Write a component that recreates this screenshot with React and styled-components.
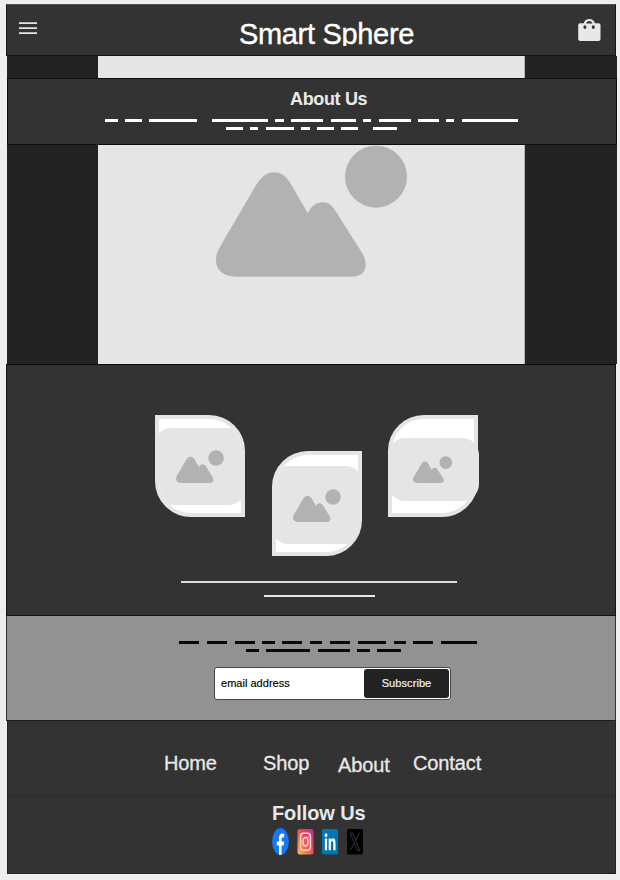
import React from "react";
import styled, { createGlobalStyle } from "styled-components";

const GlobalStyle = createGlobalStyle`
  *, *::before, *::after { box-sizing: border-box; }
  body {
    margin: 0;
    background: #eeeeee;
    font-family: "Liberation Sans", Arial, sans-serif;
  }
`;

const Page = styled.div`
  width: 620px;
  height: 880px;
  padding: 4px 0 0 6px;
  overflow: hidden;
  display: flex;
  flex-direction: column;
`;

const Header = styled.header`
  width: 610px;
  height: 52px;
  flex: none;
  display: flex;
  justify-content: space-between;
  align-items: flex-start;
  padding: 0 14px 0 12px;
  background: #333333;
  border: 1px solid #161616;
  border-top-color: #505050;
`;

const Brand = styled.h1`
  margin: 8px 0 0 38px;
  height: 33px;
  overflow: hidden;
  font-size: 29px;
  line-height: 43px;
  font-weight: 400;
  color: #ffffff;
  letter-spacing: -0.32px;
  white-space: nowrap;
  -webkit-text-stroke: 0.4px #ffffff;
`;

const MenuIcon = styled.svg`
  width: 18px;
  height: 12px;
  margin-top: 17px;
`;

const BagIcon = styled.svg`
  width: 23px;
  height: 23px;
  margin-top: 14px;
`;

const Hero = styled.section`
  width: 610px;
  height: 308px;
  flex: none;
  margin-left: 1px;
  display: flex;
  flex-direction: column;
  background: #232323;
`;

const HeroPane = styled.div`
  width: 427px;
  height: ${(p) => p.$height}px;
  margin-left: 91px;
  padding-left: 118px;
  background: #e5e5e5;
  border-right: 1px solid #b5b5b5;
`;

const Banner = styled.div`
  height: 67px;
  padding-top: 10px;
  background: #333333;
  border: 1px solid #0c0c0c;
`;

const BannerTitle = styled.h2`
  margin: 0 0 0 282px;
  height: 30px;
  font-size: 18px;
  line-height: 20px;
  font-weight: 700;
  letter-spacing: -0.35px;
  color: #e9e9e9;
`;

const DashRow = styled.div`
  display: flex;
  height: 3px;
  margin: 0 0 5px ${(p) => p.$left}px;
`;

const Dash = styled.span`
  flex: none;
  width: ${(p) => p.$w}px;
  margin-right: ${(p) => p.$gap}px;
  background: ${(p) => p.$color};
`;

const Gallery = styled.section`
  width: 610px;
  height: 252px;
  flex: none;
  display: flex;
  flex-direction: column;
  background: #333333;
  border: 1px solid #141414;
  border-top-color: #0b0b0b;
`;

const LeafRow = styled.div`
  display: flex;
  align-items: flex-start;
  height: 216px;
  padding: 50px 0 0 148px;
  gap: 27px;
`;

const Leaf = styled.div`
  width: 90px;
  height: ${(p) => p.$height}px;
  margin-top: ${(p) => p.$drop}px;
  margin-left: ${(p) => p.$shift || 0}px;
  display: flex;
  justify-content: center;
  background: #ffffff;
  border: 4px solid #e5e5e5;
  border-radius: ${(p) => (p.$flip ? "36px 0 36px 0" : "0 36px 0 36px")};
  overflow: ${(p) => (p.$spill ? "visible" : "hidden")};
`;

const Tile = styled.div`
  flex: none;
  width: ${(p) => p.$width}px;
  height: ${(p) => p.$height}px;
  margin-top: ${(p) => p.$top}px;
  display: flex;
  align-items: center;
  justify-content: center;
  background: #e5e5e5;
  border-radius: ${(p) => p.$radius || 16}px;
`;

const Rule = styled.div`
  width: ${(p) => p.$width}px;
  height: 2px;
  margin: 0 0 ${(p) => p.$below}px ${(p) => p.$left}px;
  background: ${(p) => p.$color};
`;

const Newsletter = styled.section`
  width: 610px;
  height: 105px;
  flex: none;
  padding-top: 25px;
  background: #929292;
  border: 1px solid #333333;
  border-top: 0;
  border-bottom-color: #1c1c1c;
`;

const Form = styled.form`
  width: 237px;
  height: 33px;
  margin: 15px 0 0 207px;
  display: flex;
  align-items: center;
  padding-right: 1px;
  background: #ffffff;
  border: 1px solid #484848;
  border-radius: 3px;
`;

const EmailField = styled.label`
  flex: 1;
  padding: 0 0 2px 6px;
  font-size: 11px;
  line-height: 14px;
  letter-spacing: 0.02px;
  color: #000000;
  -webkit-text-stroke: 0.15px #000000;
`;

const Subscribe = styled.button`
  width: 85px;
  height: 29px;
  padding: 0 0 2px;
  border: 0;
  border-radius: 3px;
  background: #222222;
  color: #f0f0f0;
  font: 11px "Liberation Sans", Arial, sans-serif;
  letter-spacing: 0.08px;
  -webkit-text-stroke: 0.2px #f0f0f0;
`;

const Footer = styled.footer`
  width: 609px;
  height: 153px;
  flex: none;
  margin-left: 1px;
  background: #333333;
  border: 1px solid #222222;
  border-top: 0;
`;

const Nav = styled.nav`
  display: flex;
  height: 76px;
  padding: 30px 0 0 156px;
  border-bottom: 1px solid #2c2c2c;
`;

const NavLink = styled.a`
  width: ${(p) => p.$width}px;
  margin-top: ${(p) => p.$drop || 0}px;
  font-size: 20px;
  line-height: 24px;
  letter-spacing: -0.12px;
  color: #e8e8e8;
  white-space: nowrap;
  -webkit-text-stroke: 0.3px #e8e8e8;
`;

const Follow = styled.div`
  padding: 5px 0 0 264px;
`;

const FollowTitle = styled.h3`
  margin: 0;
  height: 26px;
  font-size: 20px;
  line-height: 22px;
  font-weight: 700;
  letter-spacing: -0.1px;
  color: #e8e8e8;
`;

const Socials = styled.div`
  display: flex;
  gap: 8px;
`;

const SocialIcon = styled.svg`
  width: 17px;
  height: 27px;
`;

const aboutLines = [
  { left: 97, items: [[13, 7], [17, 7], [48, 15], [56, 7], [9, 7], [32, 8], [25, 7], [8, 8], [32, 7], [21, 7], [8, 8], [56, 0]] },
  { left: 218, items: [[17, 7], [8, 8], [28, 7], [9, 7], [17, 7], [17, 15], [24, 0]] },
];

const newsLines = [
  { left: 172.3, items: [[20, 7.8], [20, 7.8], [20, 7.5], [12.3, 7.8], [20, 7.8], [12, 7.9], [20, 7.8], [27.7, 7.9], [12.2, 7.7], [20, 7.8], [36, 0]] },
  { left: 239.4, items: [[12.3, 7.4], [44, 7.6], [32, 7.8], [12.3, 7.6], [23.8, 0]] },
];

function Dashes({ lines, color }) {
  return lines.map((line) => (
    <DashRow key={line.left} $left={line.left}>
      {line.items.map(([w, gap], i) => (
        <Dash key={i} $w={w} $gap={gap} $color={color} />
      ))}
    </DashRow>
  ));
}

function Landscape({ width, height }) {
  return (
    <svg width={width} height={height} viewBox="48 29 575 396" fill="#b2b2b2" display="block">
      <path d="M110 424C65 424 48 400 48 375C48 357 53 346 60 334L165 155C182 126 200 111 221 111C243 111 260 124 273 147L323 233C335 212 348 201 367 201C386 201 397 211 407 228L486 352C494 366 497 377 497 390C497 412 480 424 457 424Z" />
      <circle cx="528" cy="124" r="93" />
    </svg>
  );
}

export default function App() {
  return (
    <>
      <GlobalStyle />
      <Page>
        <Header>
          <MenuIcon viewBox="0 0 18 12" fill="#e2e5e3">
            <path d="M0 0.2h18v1.8H0zM0 5.2h18v1.8H0zM0 10.2h18v1.8H0z" />
          </MenuIcon>
          <Brand>Smart Sphere</Brand>
          <BagIcon viewBox="0 0 23 23">
            <path d="M5.6 5C6 2 8.4 0.1 11.3 0.1S16.6 2 17 5Z" fill="#e8e8e8" />
            <rect x="0.2" y="4.2" width="22.3" height="17.8" rx="2" fill="#e8e8e8" />
            <path d="M8.2 4.4C8.7 2.8 9.9 2 11.3 2S13.9 2.8 14.4 4.4Z" fill="#333333" />
            <ellipse cx="6.9" cy="8.1" rx="1.5" ry="1.9" fill="#333333" />
            <ellipse cx="15.3" cy="8.1" rx="1.5" ry="1.9" fill="#333333" />
          </BagIcon>
        </Header>

        <Hero>
          <HeroPane $height={22} />
          <Banner>
            <BannerTitle>About Us</BannerTitle>
            <Dashes lines={aboutLines} color="#ffffff" />
          </Banner>
          <HeroPane $height={219}>
            <Landscape width={191.7} height={132} />
          </HeroPane>
        </Hero>

        <Gallery>
          <LeafRow>
            <Leaf $height={102} $drop={0}>
              <Tile $width={90} $height={77} $top={9}>
                <Landscape width={48} height={33} />
              </Tile>
            </Leaf>
            <Leaf $height={105} $drop={36} $flip>
              <Tile $width={90} $height={78} $top={11}>
                <Landscape width={48} height={33} />
              </Tile>
            </Leaf>
            <Leaf $height={102} $drop={0} $shift={-1} $flip $spill>
              <Tile $width={91} $height={63} $top={19} $radius={17}>
                <Landscape width={39.3} height={27} />
              </Tile>
            </Leaf>
          </LeafRow>
          <Rule $width={276} $left={174} $below={12} $color="#dedede" />
          <Rule $width={111} $left={257} $below={0} $color="#e8e8e8" />
        </Gallery>

        <Newsletter>
          <Dashes lines={newsLines} color="#080808" />
          <Form>
            <EmailField>email address</EmailField>
            <Subscribe type="button">Subscribe</Subscribe>
          </Form>
        </Newsletter>

        <Footer>
          <Nav>
            <NavLink $width={99}>Home</NavLink>
            <NavLink $width={75}>Shop</NavLink>
            <NavLink $width={75} $drop={2}>About</NavLink>
            <NavLink $width={80}>Contact</NavLink>
          </Nav>
          <Follow>
            <FollowTitle>Follow Us</FollowTitle>
            <Socials>
              <SocialIcon viewBox="0 0 17 27">
                <ellipse cx="8.5" cy="13.5" rx="8.4" ry="13.4" fill="#1877f2" />
                <path d="M7 26.8V17.5H4.8V13.4H7V10.5C7 7.3 8.3 5.6 10.4 5.6C11.3 5.6 12.2 5.9 12.2 5.9V9.2H11C9.9 9.2 9.6 10.2 9.6 11.3V13.4H12L11.6 17.5H9.6V26.8Z" fill="#ffffff" />
              </SocialIcon>
              <SocialIcon viewBox="0 0 17 27">
                <defs>
                  <linearGradient id="ig" x1="0" y1="1" x2="1" y2="0">
                    <stop offset="0" stopColor="#fdc457" />
                    <stop offset="0.3" stopColor="#fb7a45" />
                    <stop offset="0.62" stopColor="#e8405f" />
                    <stop offset="1" stopColor="#a334b4" />
                  </linearGradient>
                </defs>
                <rect x="0.5" y="1" width="16" height="25.5" rx="2.5" fill="url(#ig)" />
                <rect x="3.6" y="5.2" width="9.8" height="17" rx="3" fill="none" stroke="#ffd9cf" strokeWidth="1.5" />
                <ellipse cx="8.5" cy="13.7" rx="2.5" ry="4.2" fill="none" stroke="#ffd9cf" strokeWidth="1.5" />
                <circle cx="11.3" cy="8.7" r="0.7" fill="#ffd9cf" />
              </SocialIcon>
              <SocialIcon viewBox="0 0 17 27">
                <rect x="0" y="1" width="16" height="25.5" rx="1.5" fill="#0077b5" />
                <ellipse cx="4" cy="7.2" rx="1.4" ry="1.9" fill="#ffffff" />
                <path d="M2.9 10.6H5.1V22.2H2.9ZM6.7 10.6H8.8V12.2C9.3 11 10 10.3 11 10.3C12.9 10.3 13.5 12.3 13.5 15.2V22.2H11.3V16C11.3 14.3 11.1 13.1 10.2 13.1C9.2 13.1 8.9 14.3 8.9 16V22.2H6.7Z" fill="#ffffff" />
              </SocialIcon>
              <SocialIcon viewBox="0 0 17 27">
                <rect x="0" y="1" width="16" height="25.5" rx="1.5" fill="#000000" />
                <path d="M3.2 5H5.6L12.8 22.5H10.4ZM12.3 5L8.6 12.3M7.2 15L3.3 22.5" fill="none" stroke="#3a3a3a" strokeWidth="0.9" />
              </SocialIcon>
            </Socials>
          </Follow>
        </Footer>
      </Page>
    </>
  );
}
